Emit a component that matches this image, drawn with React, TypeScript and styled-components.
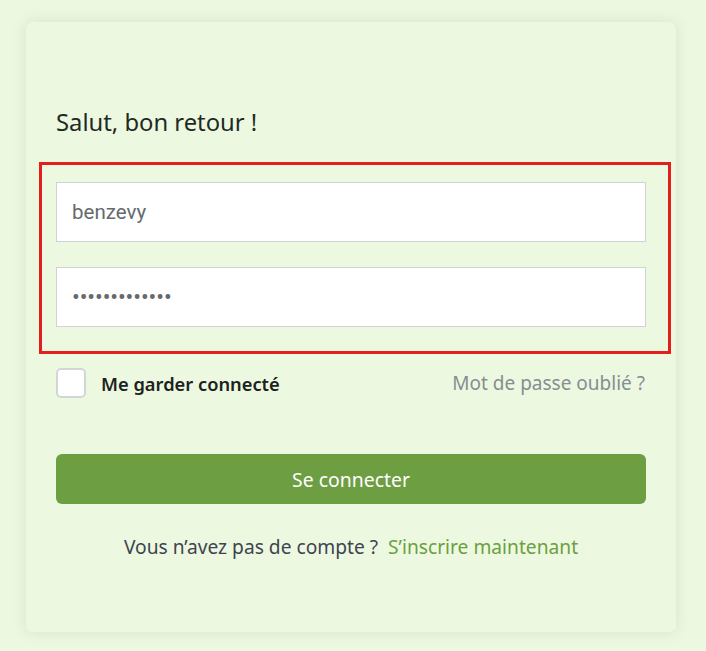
import React from "react";
import styled, { createGlobalStyle } from "styled-components";

const GlobalStyle = createGlobalStyle`
  html, body { margin: 0; padding: 0; background: #ecf8e0; }
  body { font-family: "Noto Sans", "Open Sans", sans-serif; }
  * { box-sizing: border-box; }
`;

const Page = styled.div`
  width: 706px;
  height: 651px;
  padding: 22px 30px 19px 26px;
  background: #ecf8e0;
`;

const Card = styled.div`
  height: 610px;
  background: #ecf9e0;
  border-radius: 7px;
  box-shadow: 0 0 14px rgba(120, 150, 90, 0.18);
  padding: 86px 30px 0 30px;
  display: flex;
  flex-direction: column;
`;

const Title = styled.h1`
  margin: 0;
  font-size: 23.8px;
  line-height: 28px;
  font-weight: 400;
  color: #1f2a24;
`;

const Highlight = styled.div`
  margin: 26px -25px 0 -17px;
  border: 3px solid #e41d1d;
  padding: 17px 22px 24px 14px;
  display: flex;
  flex-direction: column;
  gap: 25px;
`;

const Field = styled.input<{ $secret?: boolean }>`
  height: 60px;
  width: 100%;
  border: 1px solid #cfd3d6;
  background: #ffffff;
  padding: 0 15px;
  font-family: "Roboto", "Noto Sans", sans-serif;
  font-size: ${(p) => (p.$secret ? "23px" : "20.5px")};
  letter-spacing: ${(p) => (p.$secret ? "-0.1px" : "0")};
  color: #666a6e;
  outline: none;
  border-radius: 0;
`;

const OptionsRow = styled.div`
  margin-top: 14px;
  display: flex;
  align-items: center;
  justify-content: space-between;
`;

const RememberLabel = styled.label`
  display: flex;
  align-items: center;
  gap: 15px;
  font-size: 18.3px;
  font-weight: 600;
  color: #1d2220;
`;

const Box = styled.span`
  width: 30px;
  height: 30px;
  border: 2px solid #d3d6d9;
  border-radius: 5px;
  background: #ffffff;
`;

const Forgot = styled.a`
  font-size: 19px;
  color: #878d93;
  text-decoration: none;
  margin-right: 1px;
`;

const Submit = styled.button`
  margin-top: 56px;
  height: 50px;
  width: 100%;
  border: none;
  border-radius: 6px;
  background: #6d9e42;
  color: #ffffff;
  font-family: inherit;
  font-size: 19.4px;
`;

const Footer = styled.p`
  margin: 30px 0 0 0;
  text-align: center;
  font-size: 19.2px;
  line-height: 26px;
  color: #3e4450;
`;

const SignUp = styled.a`
  color: #6d9e42;
  text-decoration: none;
  margin-left: 10px;
`;

export default function App() {
  return (
    <>
      <GlobalStyle />
      <Page>
        <Card>
          <Title>Salut, bon retour !</Title>
          <Highlight>
            <Field type="text" defaultValue="benzevy" readOnly />
            <Field $secret type="password" defaultValue="benzevy123456" readOnly />
          </Highlight>
          <OptionsRow>
            <RememberLabel>
              <Box />
              Me garder connecté
            </RememberLabel>
            <Forgot href="#">Mot de passe oublié ?</Forgot>
          </OptionsRow>
          <Submit>Se connecter</Submit>
          <Footer>
            Vous n’avez pas de compte ?
            <SignUp href="#">S’inscrire maintenant</SignUp>
          </Footer>
        </Card>
      </Page>
    </>
  );
}
